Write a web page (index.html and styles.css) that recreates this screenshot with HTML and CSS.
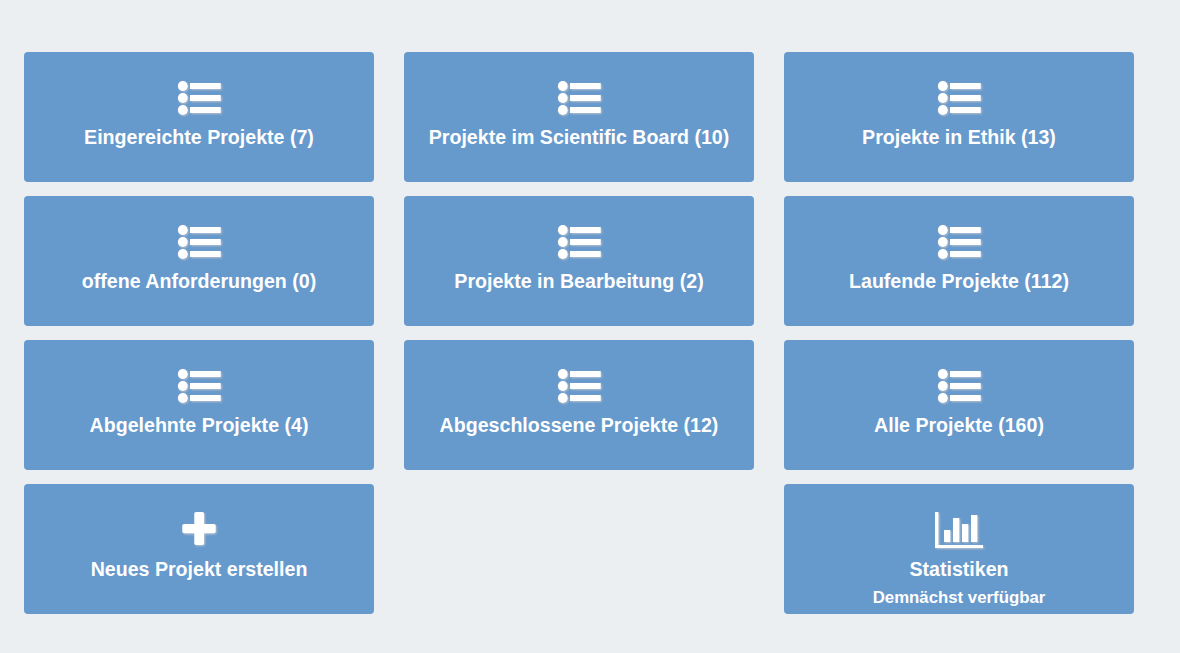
FILE: index.html
```html
<!DOCTYPE html>
<html lang="de">
<head>
<meta charset="utf-8">
<title>Projekte</title>
<link rel="stylesheet" href="styles.css">
</head>
<body>
<svg width="0" height="0" class="defs">
  <symbol id="list" viewBox="0 0 50 50">
    <circle cx="8.8" cy="14" r="4.9"/><circle cx="8.8" cy="26" r="4.9"/><circle cx="8.8" cy="38" r="4.9"/>
    <rect x="16" y="11" width="30.7" height="6"/><rect x="16" y="23" width="30.7" height="6"/><rect x="16" y="35" width="30.7" height="6"/>
  </symbol>
  <symbol id="plus" viewBox="0 0 50 50">
    <rect x="8.3" y="20" width="33.4" height="9.2" rx="1.8"/><rect x="20.3" y="8" width="9.8" height="33" rx="1.8"/>
  </symbol>
  <symbol id="chart" viewBox="0 0 50 50">
    <path d="M1 8h3.4v33H49v3H1zM10 26h6.3v12H10zM19 14h6.3v24H19zM28 20h6.3v18H28zM37 11h6.3v27H37z"/>
  </symbol>
</svg>
<main class="tiles">
  <div class="tile"><svg class="icon"><use href="#list"/></svg><span class="label">Eingereichte Projekte (7)</span></div>
  <div class="tile"><svg class="icon"><use href="#list"/></svg><span class="label">Projekte im Scientific Board (10)</span></div>
  <div class="tile"><svg class="icon"><use href="#list"/></svg><span class="label">Projekte in Ethik (13)</span></div>
  <div class="tile"><svg class="icon"><use href="#list"/></svg><span class="label">offene Anforderungen (0)</span></div>
  <div class="tile"><svg class="icon"><use href="#list"/></svg><span class="label">Projekte in Bearbeitung (2)</span></div>
  <div class="tile"><svg class="icon"><use href="#list"/></svg><span class="label">Laufende Projekte (112)</span></div>
  <div class="tile"><svg class="icon"><use href="#list"/></svg><span class="label">Abgelehnte Projekte (4)</span></div>
  <div class="tile"><svg class="icon"><use href="#list"/></svg><span class="label">Abgeschlossene Projekte (12)</span></div>
  <div class="tile"><svg class="icon"><use href="#list"/></svg><span class="label">Alle Projekte (160)</span></div>
  <div class="tile"><svg class="icon"><use href="#plus"/></svg><span class="label">Neues Projekt erstellen</span></div>
  <div class="tile tile-last"><svg class="icon"><use href="#chart"/></svg><span class="label">Statistiken</span><span class="note">Demnächst verfügbar</span></div>
</main>
</body>
</html>
```
FILE: styles.css
```css
body {
  margin: 0;
  background: #ebeff2;
  font-family: "Liberation Sans", Arial, sans-serif;
}
.defs { display: block; }
.tiles {
  display: grid;
  grid-template-columns: repeat(3, 350px);
  grid-auto-rows: 130px;
  gap: 14px 30px;
  padding: 52px 24px 39px;
}
.tile {
  box-sizing: border-box;
  display: flex;
  flex-direction: column;
  align-items: center;
  padding-top: 20px;
  border-radius: 4px;
  background: #6699cc;
  color: #fff;
  font-weight: bold;
  white-space: nowrap;
}
.tile-last { grid-column: 3; }
.icon {
  flex: none;
  width: 50px;
  height: 50px;
  fill: #fff;
  filter: drop-shadow(1px 1px 1px rgba(204, 204, 204, .8));
}
.label {
  margin-top: 3px;
  font-size: 19.6px;
  line-height: 24px;
}
.note {
  margin-top: 7px;
  font-size: 16.8px;
  line-height: 20px;
}
```
